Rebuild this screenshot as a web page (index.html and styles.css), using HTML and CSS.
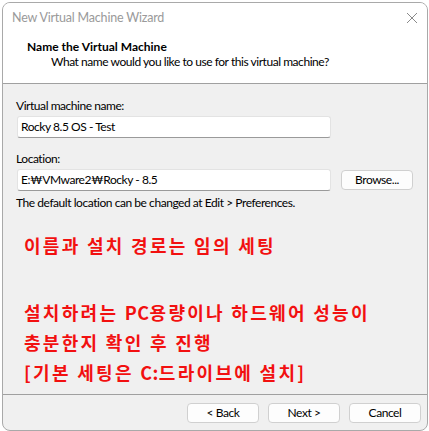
FILE: index.html
```html
<!DOCTYPE html>
<html>
<head>
<meta charset="utf-8">
<link rel="stylesheet" href="styles.css">
</head>
<body>
<div class="backdrop">
  <div class="window">
    <div class="titlebar">
      <span class="title">New Virtual Machine Wizard</span>
      <svg class="close" width="12" height="12" viewBox="0 0 12 12"><path d="M1 1 L11 11 M11 1 L1 11" stroke="#8a8a8a" stroke-width="1" fill="none"/></svg>
    </div>
    <div class="header">
      <div class="h-title">Name the Virtual Machine</div>
      <div class="h-sub">What name would you like to use for this virtual machine?</div>
    </div>
    <div class="body">
      <div class="label">Virtual machine name:</div>
      <div class="row">
        <div class="input">Rocky 8.5 OS - Test</div>
      </div>
      <div class="label loc">Location:</div>
      <div class="row">
        <div class="input">E:₩VMware2₩Rocky - 8.5</div>
        <div class="btn browse">Browse...</div>
      </div>
      <div class="hint">The default location can be changed at Edit &gt; Preferences.</div>
      <div class="note">
        <div class="n1">이름과 설치 경로는 임의 세팅</div>
        <div class="n2">설치하려는 <span class="latin">PC</span>용량이나 하드웨어 성능이</div>
        <div class="n3">충분한지 확인 후 진행</div>
        <div class="n3">[기본 세팅은 <span class="latin">C:</span>드라이브에 설치]</div>
      </div>
    </div>
    <div class="footer">
      <div class="btn">&lt; Back</div>
      <div class="btn">Next &gt;</div>
      <div class="btn">Cancel</div>
    </div>
  </div>
</div>
</body>
</html>
```
FILE: styles.css
```css
* { box-sizing: border-box; }
html, body { margin: 0; padding: 0; }
body {
  width: 429px;
  height: 431px;
  overflow: hidden;
  background: #ffffff;
  font-family: Lato, "Liberation Sans", sans-serif;
  font-size: 12px;
  letter-spacing: -0.45px;
  color: #000;
}
.backdrop {
  padding: 2px 1px 0 2px;
}
.window {
  width: 426px;
  height: 429px;
  border: 1px solid #a9a9a9;
  border-radius: 8px;
  overflow: hidden;
  background: #f0f0f0;
  display: flex;
  flex-direction: column;
}
.titlebar {
  height: 30px;
  background: #fff;
  display: flex;
  align-items: center;
  justify-content: space-between;
  padding: 0 9px 0 9px;
  flex: none;
}
.title {
  color: #9a9a9a;
  font-size: 12.5px;
  letter-spacing: -0.2px;
  margin-top: -2px;
}
.header {
  height: 51px;
  background: #fff;
  border-bottom: 1px solid #a0a0a0;
  padding-top: 6px;
  flex: none;
}
.h-title {
  font-weight: 700;
  font-size: 12px;
  letter-spacing: 0;
  padding-left: 24px;
  line-height: 16px;
}
.h-sub {
  font-size: 12px;
  padding-left: 48px;
  line-height: 16px;
  margin-top: -1px;
}
.body {
  flex: 1;
  padding: 14px 0 0 13px;
}
.label {
  font-size: 12px;
  line-height: 16px;
  height: 18px;
}
.label.loc { margin-top: 13px; }
.row {
  display: flex;
  align-items: center;
  gap: 10px;
  padding-left: 1px;
}
.input {
  width: 314px;
  height: 22px;
  background: #fff;
  border: 1px solid #e3e3e3;
  border-bottom: 1px solid #9a9a9a;
  border-radius: 3px;
  padding: 2px 0 0 3px;
  font-size: 12px;
  line-height: 16px;
}
.btn {
  width: 72px;
  height: 20px;
  background: #fdfdfd;
  border: 1px solid #d0d0d0;
  border-radius: 4px;
  text-align: center;
  font-size: 12px;
  line-height: 17px;
}
.hint {
  font-size: 12px;
  line-height: 16px;
  margin-top: 4px;
}
.note {
  color: #f21010;
  font-family: "Noto Sans CJK KR", sans-serif;
  font-weight: 700;
  font-size: 18px;
  letter-spacing: 2.3px;
  padding-left: 8px;
  margin-top: 21px;
}
.latin { letter-spacing: 0.5px; }
.n1 { line-height: 26px; }
.n2 { line-height: 26px; margin-top: 41px; }
.n3 { line-height: 26px; margin-top: 4px; }
.footer {
  height: 36px;
  border-top: 1px solid #a0a0a0;
  display: flex;
  justify-content: flex-end;
  align-items: flex-start;
  gap: 9px;
  padding: 8px 6px 0 0;
  flex: none;
}
```
